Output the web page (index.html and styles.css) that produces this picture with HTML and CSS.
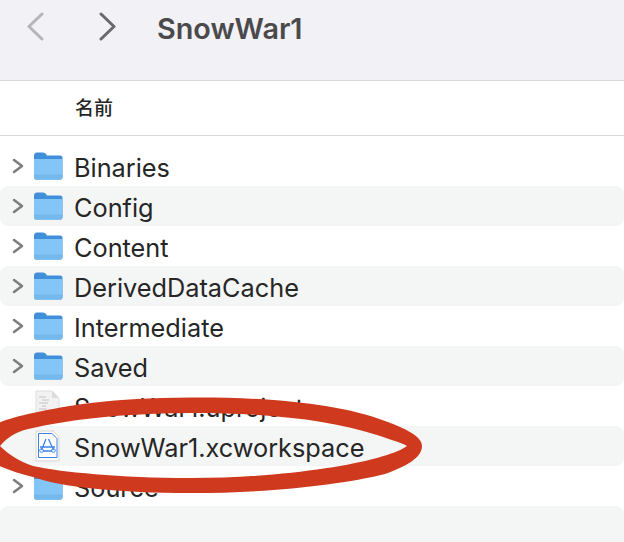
FILE: index.html
```html
<!DOCTYPE html>
<html lang="zh">
<head>
  <meta charset="UTF-8">
  <title>SnowWar1</title>
  <link rel="stylesheet" href="styles.css">
</head>
<body>
  <svg width="0" height="0" class="defs">
    <symbol id="folder" viewBox="0 0 30 28">
      <path d="M1 4 Q1 .5 4 .5 H10 Q12 .5 13 2 L14 3.500 H27 Q29.500 3.500 29.500 6 V25 Q29.500 27.500 27.500 27.500 H3 Q1 27.500 1 25 Z" fill="#3f8fdb"/>
      <path d="M1 7 H29.500 V25 Q29.500 27.500 27.500 27.500 H3 Q1 27.500 1 25 Z" fill="#84c5f8"/>
      <path d="M1 22.500 H29.500 V25 Q29.500 27.500 27.500 27.500 H3 Q1 27.500 1 25 Z" fill="#74b8ec"/>
    </symbol>
    <symbol id="chevron" viewBox="0 0 12 16">
      <path d="M2 2 L10 8 L2 14" fill="none" stroke="#7d7d7d" stroke-width="2.500" stroke-linecap="round" stroke-linejoin="round"/>
    </symbol>
  </svg>

  <header class="toolbar">
    <svg class="nav" width="20" height="30" viewBox="0 0 20 30"><path d="M17 2 L4 14.500 L17 27" fill="none" stroke="#b5b5b7" stroke-width="3" stroke-linecap="round" stroke-linejoin="round"/></svg>
    <svg class="nav nav-next" width="20" height="30" viewBox="0 0 20 30"><path d="M3 2 L16 14.500 L3 27" fill="none" stroke="#69696b" stroke-width="3" stroke-linecap="round" stroke-linejoin="round"/></svg>
    <h1 class="title">SnowWar1</h1>
  </header>

  <div class="column-head">名前</div>

  <div class="list">
    <div class="row"><svg class="chev"><use href="#chevron"/></svg><svg class="icon"><use href="#folder"/></svg><span class="name">Binaries</span></div>
    <div class="row"><svg class="chev"><use href="#chevron"/></svg><svg class="icon"><use href="#folder"/></svg><span class="name">Config</span></div>
    <div class="row"><svg class="chev"><use href="#chevron"/></svg><svg class="icon"><use href="#folder"/></svg><span class="name">Content</span></div>
    <div class="row"><svg class="chev"><use href="#chevron"/></svg><svg class="icon"><use href="#folder"/></svg><span class="name">DerivedDataCache</span></div>
    <div class="row"><svg class="chev"><use href="#chevron"/></svg><svg class="icon"><use href="#folder"/></svg><span class="name">Intermediate</span></div>
    <div class="row"><svg class="chev"><use href="#chevron"/></svg><svg class="icon"><use href="#folder"/></svg><span class="name">Saved</span></div>
    <div class="row">
      <span class="chev"></span>
      <svg class="icon doc" viewBox="0 0 30 32">
        <path d="M3 1 H19 L26 8 V32 H3 Z" fill="#f2f2f2" stroke="#dedede" stroke-width="1"/>
        <path d="M19 1 V8 H26 Z" fill="#dcdcdc"/>
        <path d="M6 7 H13 M9 10 H16 M6 13 H15 M9 16 H13 M6 19 H14" stroke="#c2c2c2" stroke-width="1"/>
      </svg>
      <span class="name">SnowWar1.uproject</span>
    </div>
    <div class="row">
      <span class="chev"></span>
      <svg class="icon doc" viewBox="0 0 30 32">
        <path d="M3 1 H20 L26 7 V31 H3 Z" fill="#fcfcfc" stroke="#d6d6d6" stroke-width="1"/>
        <path d="M5.500 3.500 H19 L24 8.500 V27.500 H5.500 Z" fill="#fff" stroke="#3d82ea" stroke-width="1"/>
        <path d="M13 9 L8.500 20 M15.500 9 L20.500 20 M7 17 H22 M10 21 H19" fill="none" stroke="#3d82ea" stroke-width="1.300"/>
        <circle cx="8.500" cy="20.500" r="1.800" fill="none" stroke="#3d82ea"/>
        <circle cx="20.500" cy="20.500" r="1.800" fill="none" stroke="#3d82ea"/>
      </svg>
      <span class="name">SnowWar1.xcworkspace</span>
    </div>
    <div class="row"><svg class="chev"><use href="#chevron"/></svg><svg class="icon"><use href="#folder"/></svg><span class="name">Source</span></div>
    <div class="row row-last"></div>
  </div>

  <svg class="circle" width="624" height="542" viewBox="0 0 624 542">
    <path fill="#cf3a1f" fill-rule="evenodd" d="M-25 444 C-20 430 -5 421 33 413 C70 405 110 398 190 397.500 C270 397 340 404 385 421 C412 431 422 438 422 446 C422 458 405 467 385 474 C340 485 270 493 190 493 C120 493 60 487 33 477 C5 470 -25 458 -25 444 Z M0 446 C8 436 20 430 33 428 C70 420 110 414 190 413 C270 413 330 420 377 435 C392 440 402 443 407 446 C400 451 390 454 377 458 C340 468 270 478 190 478 C120 478 60 472 33 466 C20 462 8 454 0 446 Z"/>
  </svg>
</body>
</html>
```

FILE: styles.css
```css
html, body {
  margin: 0;
  height: 542px;
  overflow: hidden;
}
body {
  position: relative;
  background: #fff;
  font-family: Inter, "Liberation Sans", Arial, sans-serif;
  color: #262626;
}
.defs {
  display: block;
}
.toolbar {
  height: 68px;
  background: #f2f1f6;
  border-bottom: 1px solid #d9d8dc;
  display: flex;
  align-items: flex-start;
  padding: 12px 0 0 25px;
}
.nav-next {
  margin-left: 53px;
}
.title {
  margin: 0 0 0 39px;
  font-size: 28.800px;
  line-height: 34px;
  font-weight: 600;
  color: #4a4a4c;
}
.column-head {
  height: 54px;
  line-height: 52px;
  padding-left: 75px;
  border-bottom: 1px solid #d9d9d9;
  font-family: "Noto Sans CJK JP", sans-serif;
  font-size: 19px;
  font-weight: 500;
}
.list {
  padding-top: 10px;
}
.row {
  height: 40px;
  display: flex;
  align-items: center;
  font-size: 25.300px;
  border-radius: 8px;
}
.row:nth-child(even) {
  background: #f4f5f5;
}
.name {
  padding-top: 2px;
}
.chev {
  width: 12px;
  height: 16px;
  margin-left: 12px;
  flex: none;
}
.icon {
  width: 30px;
  height: 28px;
  margin-left: 9px;
  margin-right: 11px;
  flex: none;
}
.doc {
  height: 32px;
}
.row-last {
  height: 36px;
  border-radius: 8px 8px 0 0;
}
.circle {
  position: absolute;
  left: 0;
  top: 0;
}
```
